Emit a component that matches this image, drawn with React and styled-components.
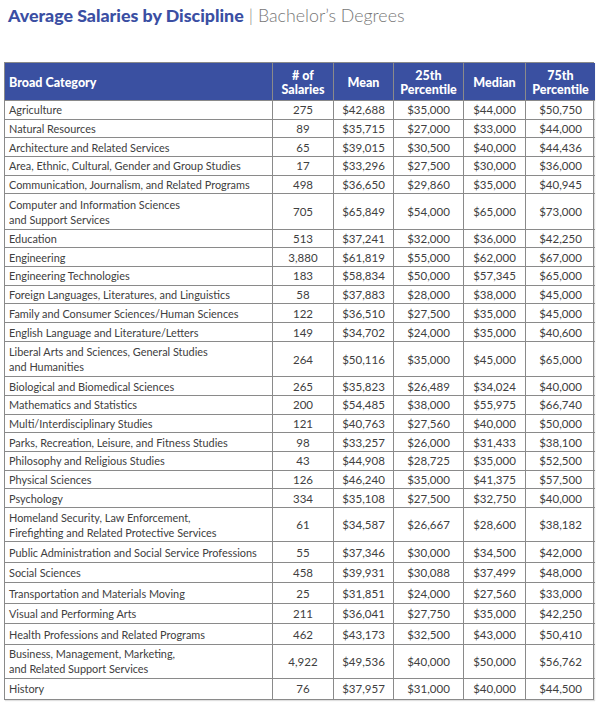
import React from "react";
import styled, { createGlobalStyle } from "styled-components";

const Global = createGlobalStyle`
  html, body { margin: 0; padding: 0; background: #fff; }
  body { font-family: Lato, "Open Sans", sans-serif; }
`;

const Page = styled.div`
  width: 600px;
  height: 702px;
  padding: 4px 0 0 4px;
  box-sizing: border-box;
  overflow: hidden;
`;

const Title = styled.h1`
  margin: 0 0 0 4px;
  height: 58px;
  font-size: 17.8px;
  line-height: 22px;
  font-weight: 400;
  white-space: nowrap;
`;

const TitleMain = styled.span`
  color: #3b4fa3;
  font-weight: 900;
`;

const TitleSep = styled.span`
  color: #8a8a8a;
  font-weight: 300;
  margin: 0 5px;
`;

const TitleSub = styled.span`
  color: #777;
  font-weight: 300;
`;

const Table = styled.div`
  width: 590px;
  display: grid;
  grid-template-columns: 267px 61px 60px 70px 62px 70px;
  border: 1px solid #8a8a8a;
  box-sizing: border-box;
  box-shadow: 1px 1px 1px rgba(0,0,0,0.12);
`;

const HeadCell = styled.div`
  height: 37px;
  background: #3a50a1;
  color: #fff;
  font-weight: 900;
  font-size: 12.5px;
  line-height: 14px;
  display: flex;
  align-items: center;
  justify-content: ${p => (p.$left ? "flex-start" : "center")};
  text-align: ${p => (p.$left ? "left" : "center")};
  padding: ${p => (p.$left ? "2px 0 0 4px" : "2px 0 0 0")};
  box-sizing: border-box;
  border-left: ${p => (p.$first ? "none" : "1px solid #8a8a8a")};
`;

const Cell = styled.div`
  box-sizing: border-box;
  color: #404040;
  font-size: ${p => (p.$left ? "10.9px" : "11.5px")};
  line-height: 15px;
  display: flex;
  align-items: center;
  justify-content: ${p => (p.$left ? "flex-start" : "center")};
  padding-left: ${p => (p.$left ? "4px" : "0")};
  border-top: 1px solid #8a8a8a;
  border-left: ${p => (p.$first ? "none" : "1px solid #8a8a8a")};
  white-space: nowrap;
`;

const rows = [
  ["Agriculture", "275", "$42,688", "$35,000", "$44,000", "$50,750", 18.7],
  ["Natural Resources", "89", "$35,715", "$27,000", "$33,000", "$44,000", 18.7],
  ["Architecture and Related Services", "65", "$39,015", "$30,500", "$40,000", "$44,436", 18.7],
  ["Area, Ethnic, Cultural, Gender and Group Studies", "17", "$33,296", "$27,500", "$30,000", "$36,000", 18.7],
  ["Communication, Journalism, and Related Programs", "498", "$36,650", "$29,860", "$35,000", "$40,945", 18.7],
  ["Computer and Information Sciences\nand Support Services", "705", "$65,849", "$54,000", "$65,000", "$73,000", 35.3],
  ["Education", "513", "$37,241", "$32,000", "$36,000", "$42,250", 18.7],
  ["Engineering", "3,880", "$61,819", "$55,000", "$62,000", "$67,000", 18.7],
  ["Engineering Technologies", "183", "$58,834", "$50,000", "$57,345", "$65,000", 18.7],
  ["Foreign Languages, Literatures, and Linguistics", "58", "$37,883", "$28,000", "$38,000", "$45,000", 18.7],
  ["Family and Consumer Sciences/Human Sciences", "122", "$36,510", "$27,500", "$35,000", "$45,000", 18.7],
  ["English Language and Literature/Letters", "149", "$34,702", "$24,000", "$35,000", "$40,600", 18.7],
  ["Liberal Arts and Sciences, General Studies\nand Humanities", "264", "$50,116", "$35,000", "$45,000", "$65,000", 35.3],
  ["Biological and Biomedical Sciences", "265", "$35,823", "$26,489", "$34,024", "$40,000", 18.7],
  ["Mathematics and Statistics", "200", "$54,485", "$38,000", "$55,975", "$66,740", 18.7],
  ["Multi/Interdisciplinary Studies", "121", "$40,763", "$27,560", "$40,000", "$50,000", 18.7],
  ["Parks, Recreation, Leisure, and Fitness Studies", "98", "$33,257", "$26,000", "$31,433", "$38,100", 18.7],
  ["Philosophy and Religious Studies", "43", "$44,908", "$28,725", "$35,000", "$52,500", 18.7],
  ["Physical Sciences", "126", "$46,240", "$35,000", "$41,375", "$57,500", 18.7],
  ["Psychology", "334", "$35,108", "$27,500", "$32,750", "$40,000", 18.7],
  ["Homeland Security, Law Enforcement,\nFirefighting and Related Protective Services", "61", "$34,587", "$26,667", "$28,600", "$38,182", 34.5],
  ["Public Administration and Social Service Professions", "55", "$37,346", "$30,000", "$34,500", "$42,000", 20.5],
  ["Social Sciences", "458", "$39,931", "$30,088", "$37,499", "$48,000", 20.5],
  ["Transportation and Materials Moving", "25", "$31,851", "$24,000", "$27,560", "$33,000", 20.5],
  ["Visual and Performing Arts", "211", "$36,041", "$27,750", "$35,000", "$42,250", 20.5],
  ["Health Professions and Related Programs", "462", "$43,173", "$32,500", "$43,000", "$50,410", 20.5],
  ["Business, Management, Marketing,\nand Related Support Services", "4,922", "$49,536", "$40,000", "$50,000", "$56,762", 34],
  ["History", "76", "$37,957", "$31,000", "$40,000", "$44,500", 21],
];

const CatText = styled.span`
  white-space: pre-line;
`;

export default function App() {
  return (
    <Page>
      <Global />
      <Title>
        <TitleMain>Average Salaries by Discipline</TitleMain>
        <TitleSep>|</TitleSep>
        <TitleSub>Bachelor’s Degrees</TitleSub>
      </Title>
      <Table>
        <HeadCell $left $first>Broad Category</HeadCell>
        <HeadCell># of<br />Salaries</HeadCell>
        <HeadCell>Mean</HeadCell>
        <HeadCell>25th<br />Percentile</HeadCell>
        <HeadCell>Median</HeadCell>
        <HeadCell>75th<br />Percentile</HeadCell>
        {rows.map((r) => {
          const h = r[6];
          return (
            <React.Fragment key={r[0]}>
              <Cell $left $first style={{ height: h }}>
                <CatText>{r[0]}</CatText>
              </Cell>
              {r.slice(1, 6).map((v, i) => (
                <Cell key={i} style={{ height: h }}>{v}</Cell>
              ))}
            </React.Fragment>
          );
        })}
      </Table>
    </Page>
  );
}
